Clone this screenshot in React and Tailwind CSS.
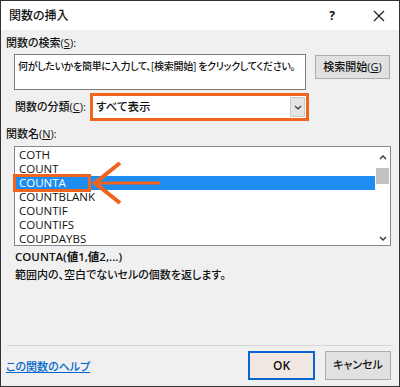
import React from "react";

const fns = ["COTH", "COUNT", "COUNTA", "COUNTBLANK", "COUNTIF", "COUNTIFS", "COUPDAYBS"];

const App = () => {
  return (
    <div className="w-[400px] h-[387px] border border-[#333] bg-[#f0f0f0] flex flex-col text-[11px] font-medium text-[#111] relative overflow-hidden font-['Open_Sans','Noto_Sans_CJK_JP',sans-serif] [font-feature-settings:'palt']">
      {/* title bar */}
      <div className="h-[29px] bg-white flex items-center pl-[8px] shrink-0">
        <span className="text-[12px]">関数の挿入</span>
        <span className="ml-auto mr-[38px] font-bold text-[12px]">?</span>
        <svg width="12" height="12" viewBox="0 0 12 12" className="mr-[14px]">
          <path d="M1 1L11 11M11 1L1 11" stroke="#222" strokeWidth="1.2" />
        </svg>
      </div>

      <div className="flex flex-col px-[5px]">
        <div className="mt-[6px] h-[14px] leading-[14px] whitespace-nowrap">
          関数の検索(<span className="underline">S</span>):
        </div>

        <div className="flex mt-[4px] ml-[8px]">
          <div className="w-[292px] h-[36px] bg-white border border-[#7a7a7a] px-[3px] pt-[4px] text-[10px] tracking-[-0.3px] leading-[14px] whitespace-nowrap overflow-hidden">
            何がしたいかを簡単に入力して、[検索開始] をクリックしてください。
          </div>
          <div className="ml-[9px] mt-[1px] w-[75px] h-[24px] border border-[#adadad] bg-[#e1e1e1] flex items-center justify-center whitespace-nowrap">
            検索開始(<span className="underline">G</span>)
          </div>
        </div>

        <div className="flex items-center mt-[3px] ml-[9px]">
          <span className="w-[75px] whitespace-nowrap">
            関数の分類(<span className="underline">C</span>):
          </span>
          <div className="w-[219px] h-[28px] border-[3px] border-[#f0641e] bg-white flex items-center">
            <span className="pl-[3px] text-[11.5px]">すべて表示</span>
            <div className="ml-auto mr-[1px] w-[15px] h-[20px] bg-[#e5e5e5] border border-[#c8c8c8] flex items-center justify-center">
              <svg width="8" height="5" viewBox="0 0 8 5">
                <path d="M1 1L4 4L7 1" stroke="#333" strokeWidth="1.2" fill="none" />
              </svg>
            </div>
          </div>
        </div>

        <div className="mt-[6px] h-[14px] leading-[14px] whitespace-nowrap">
          関数名(<span className="underline">N</span>):
        </div>

        <div className="mt-[5px] ml-[8px] w-[377px] h-[100px] bg-white border border-[#828790] flex relative">
          <div className="flex-1 pt-[1px] pl-[1px] text-[11.5px]">
            {fns.map((f) => (
              <div
                key={f}
                className={
                  "h-[14px] leading-[14px] pl-[3px] " +
                  (f === "COUNTA" ? "bg-[#1e8cf0] text-white" : "")
                }
              >
                {f}
              </div>
            ))}
          </div>
          <div className="w-[15px] flex flex-col items-center">
            <svg width="8" height="5" viewBox="0 0 8 5" className="mt-[8px]">
              <path d="M1 4L4 1L7 4" stroke="#333" strokeWidth="1.4" fill="none" />
            </svg>
            <div className="mt-[8px] w-[13px] h-[16px] bg-[#c2c2c2]" />
            <svg width="8" height="5" viewBox="0 0 8 5" className="mt-auto mb-[4px]">
              <path d="M1 1L4 4L7 1" stroke="#333" strokeWidth="1.4" fill="none" />
            </svg>
          </div>

          {/* annotation overlay */}
          <div className="absolute left-[-2px] top-[27px] w-[78px] h-[18px] border-[3px] border-[#f0641e]" />
          <svg
            width="80"
            height="44"
            viewBox="0 0 80 44"
            className="absolute left-[77px] top-[14px]"
          >
            <path d="M28 2L3 22L28 42" stroke="#f0641e" strokeWidth="4" fill="none" />
            <path d="M4 22H68" stroke="#f0641e" strokeWidth="3" />
          </svg>
        </div>

        <div className="mt-[3px] ml-[9px] h-[16px] leading-[16px] font-semibold text-[11.5px]">COUNTA(値1,値2,...)</div>
        <div className="mt-[2px] ml-[9px] h-[16px] leading-[16px] whitespace-nowrap">
          範囲内の、空白でないセルの個数を返します。
        </div>

        <div className="mt-[62px] h-px bg-[#d5d5d5] mx-[1px]" />

        <div className="flex items-center mt-[5px]">
          <span className="text-[#0066cc] underline mt-[4px]">この関数のヘルプ</span>
          <div className="ml-auto w-[67px] h-[29px] border-2 border-[#0a64d2] bg-[#f1e8e4] flex items-center justify-center font-semibold text-[12px]">
            OK
          </div>
          <div className="ml-[10px] mr-[3px] w-[66px] h-[29px] border border-[#adadad] bg-[#e1e1e1] flex items-center justify-center">
            キャンセル
          </div>
        </div>
      </div>
    </div>
  );
};

export default App;
